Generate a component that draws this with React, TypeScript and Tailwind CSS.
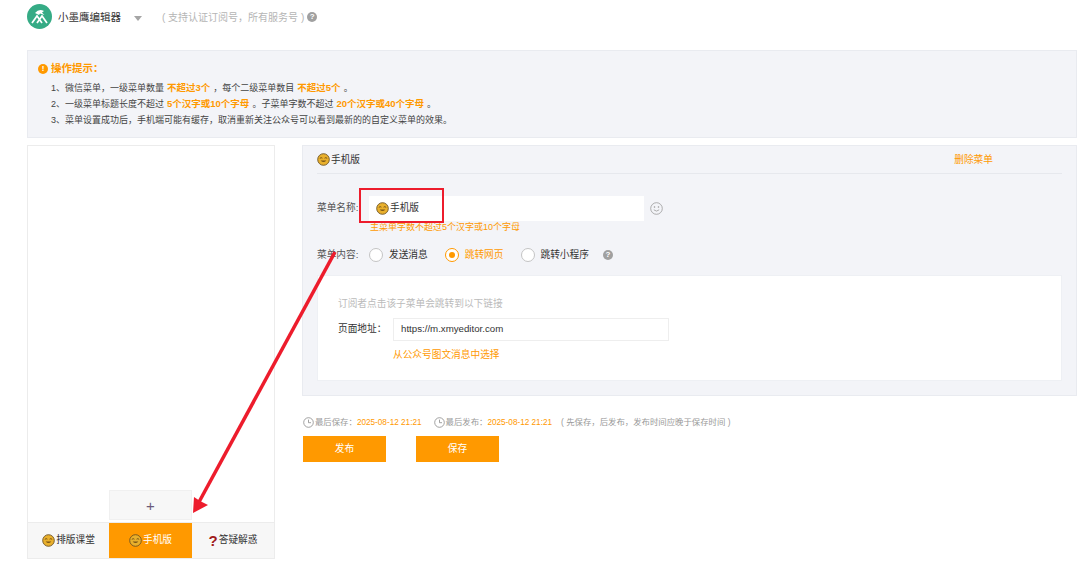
const cjk = "font-['Liberation_Sans','Noto_Sans_CJK_SC',sans-serif]";

function Face({ size = 13 }: { size?: number }) {
  return (
    <svg width={size} height={size} viewBox="0 0 13 13" className="inline-block shrink-0">
      <circle cx="6.5" cy="6.5" r="5.8" fill="#e9b02c" stroke="#6e5220" strokeWidth="0.9" />
      <path d="M2.8 5.4 Q4.2 4 5.4 5.2 M7.6 5.2 Q8.8 4 10.2 5.4" stroke="#6b4a12" strokeWidth="0.9" fill="none" />
      <path d="M3.6 7.4 Q6.5 10.6 9.4 7.4 Z" fill="#7a5514" />
    </svg>
  );
}

function Help({ className = "" }: { className?: string }) {
  return (
    <span className={`flex h-[10px] w-[10px] items-center justify-center rounded-full bg-[#a0a0a0] text-[8px] font-bold leading-none text-white ${className}`}>?</span>
  );
}

function Clock() {
  return (
    <svg width="11" height="11" viewBox="0 0 11 11" fill="none" stroke="#8a8a8a" strokeWidth="0.8" className="shrink-0">
      <circle cx="5.5" cy="5.5" r="4.8" />
      <path d="M5.5 2.6 V5.7 H8" />
    </svg>
  );
}

function Radio({ active, label }: { active?: boolean; label: string }) {
  return (
    <div className="flex items-center gap-[6px]">
      <span className={`flex h-[14px] w-[14px] items-center justify-center rounded-full border bg-white ${active ? "border-[#ff9900]" : "border-[#c4c4c4]"}`}>
        {active && <span className="h-[6px] w-[6px] rounded-full bg-[#ff9900]" />}
      </span>
      <span className={active ? "text-[#ff9900]" : "text-[#333]"}>{label}</span>
    </div>
  );
}

function Hl({ children }: { children: React.ReactNode }) {
  return <b className="mx-[3px] text-[9.5px] font-bold text-[#ff9900]">{children}</b>;
}

export default function App() {
  return (
    <div className={`relative h-[563px] w-[1080px] overflow-hidden bg-white pl-[27px] pr-[3px] text-[9.7px] text-[#333] ${cjk}`}>
      <header className="flex h-[50px] items-start pt-[4px]">
        <svg width="25" height="25" viewBox="0 0 25 25" className="shrink-0">
          <circle cx="12.5" cy="12.5" r="12.5" fill="#35ab85" />
          <path d="M8 9 Q12 4 17 7 L15 8.5 L17.5 11 L13 9.5 L12 11 Z" fill="#fff" />
          <path d="M5 19 L10 12 L15 19 M20 19 L15 12 L10 19" stroke="#fff" strokeWidth="1.7" fill="none" />
        </svg>
        <span className="ml-[6px] mt-[7px] text-[10.5px] leading-[13px]">小墨鹰编辑器</span>
        <span className="ml-[13px] mt-[12px] h-0 w-0 border-x-[4.5px] border-t-[5px] border-x-transparent border-t-[#a5a5a5]" />
        <span className="ml-[20px] mt-[7px] text-[10px] leading-[13px] text-[#b5b5b5]">( 支持认证订阅号，所有服务号 )</span>
        <Help className="ml-[3px] mt-[8px]" />
      </header>

      <section className="h-[88px] border border-[#e9ebf0] bg-[#f3f4f8] pl-[10px] pt-[11px]">
        <div className="flex items-center gap-[3px] font-bold text-[#ff9900]">
          <span className="flex h-[10px] w-[10px] items-center justify-center rounded-full bg-[#ff9900] text-[8px] leading-none text-white">!</span>
          <span className="text-[10.5px] leading-[13px]">操作提示：</span>
        </div>
        <ol className="ml-[13px] mt-[5px] text-[9px] leading-[15.3px] text-[#444]">
          <li>1、微信菜单，一级菜单数量<Hl>不超过3个</Hl>，每个二级菜单数目<Hl>不超过5个</Hl>。</li>
          <li>2、一级菜单标题长度不超过<Hl>5个汉字或10个字母</Hl>。子菜单字数不超过<Hl>20个汉字或40个字母</Hl>。</li>
          <li>3、菜单设置成功后，手机端可能有缓存，取消重新关注公众号可以看到最新的的自定义菜单的效果。</li>
        </ol>
      </section>

      <main className="mt-[7px] flex items-start">
        <aside className="flex h-[414px] w-[248px] flex-col justify-end border border-[#ececec] bg-white">
          <div className="mb-[2px] ml-[81px] flex h-[30px] w-[83px] items-center justify-center border border-[#f0f0f0] bg-[#f7f7f7] text-[15px] font-light leading-none text-[#6b5a7a]">+</div>
          <nav className="grid h-[36px] grid-cols-[81px_83px_1fr] border-t border-[#ececec] bg-[#f7f7f7]">
            <div className="flex items-center justify-center gap-px"><Face />排版课堂</div>
            <div className="flex items-center justify-center gap-px bg-[#ff9900] text-white"><Face />手机版</div>
            <div className="flex items-center justify-center gap-px"><span className="text-[15px] font-bold leading-none text-[#a11b1b]">?</span>答疑解惑</div>
          </nav>
        </aside>

        <div className="ml-[27px] flex-1">
          <section className="h-[251px] border border-[#e9ebf0] bg-[#f3f4f8] px-[14px]">
            <div className="flex h-[28px] items-center justify-between border-b border-[#e6e8ed] pr-[69px] pt-[1px]">
              <span className="flex items-center gap-px"><Face />手机版</span>
              <span className="text-[#ff9900]">删除菜单</span>
            </div>
            <div className="mt-[22px] flex items-center">
              <label className="w-[52px] text-[#555]">菜单名称:</label>
              <div className="flex h-[25px] w-[275px] items-center gap-px bg-white pl-[7px]"><Face />手机版</div>
              <svg width="13" height="13" viewBox="0 0 13 13" fill="none" stroke="#9a9a9a" strokeWidth="0.8" className="ml-[6px]">
                <circle cx="6.5" cy="6.5" r="5.8" />
                <circle cx="4.5" cy="5" r="0.5" />
                <circle cx="8.5" cy="5" r="0.5" />
                <path d="M3.8 7.8 Q6.5 10.4 9.2 7.8" />
              </svg>
            </div>
            <p className="ml-[53px] mt-[1px] text-[9px] leading-[11px] text-[#ff9900]">主菜单字数不超过5个汉字或10个字母</p>
            <div className="mt-[15px] flex items-center">
              <label className="w-[52px] text-[#555]">菜单内容:</label>
              <div className="flex items-center gap-[17px]">
                <Radio label="发送消息" />
                <Radio active label="跳转网页" />
                <Radio label="跳转小程序" />
              </div>
              <Help className="ml-[14px]" />
            </div>
            <div className="mt-[12px] h-[106px] border border-[#eef0f4] bg-white pl-[20px] pt-[21px]">
              <p className="leading-[13px] text-[#bbb]">订阅者点击该子菜单会跳转到以下链接</p>
              <div className="mt-[8px] flex items-center">
                <label className="w-[55px] text-[#333]">页面地址：</label>
                <div className="flex h-[23px] w-[276px] items-center border border-[#eeeeee] pl-[7px] text-[#333]">https://m.xmyeditor.com</div>
              </div>
              <p className="ml-[55px] mt-[7px] leading-[13px] text-[#ff9900]">从公众号图文消息中选择</p>
            </div>
          </section>

          <div className="ml-px mt-[20px] flex items-center text-[8.4px] leading-[13px] text-[#999]">
            <Clock />
            <span className="ml-px">最后保存：</span>
            <span className="text-[8.2px] text-[#ff9900]">2025-08-12 21:21</span>
            <span className="ml-[12px]"><Clock /></span>
            <span className="ml-px">最后发布：</span>
            <span className="text-[8.2px] text-[#ff9900]">2025-08-12 21:21</span>
            <span className="ml-[9px]">( 先保存，后发布，发布时间应晚于保存时间 )</span>
          </div>
          <div className="ml-px mt-[7px] flex gap-[30px]">
            <button className="h-[26px] w-[83px] bg-[#ff9900] text-[9.7px] text-white">发布</button>
            <button className="h-[26px] w-[83px] bg-[#ff9900] text-[9.7px] text-white">保存</button>
          </div>
        </div>
      </main>

      <div className="absolute left-[359px] top-[188px] h-[35px] w-[85px] border-2 border-[#ed1c2c]" />
      <svg width="160" height="270" viewBox="0 0 160 270" className="pointer-events-none absolute left-[190px] top-[245px]" fill="none">
        <path d="M145 7 L9 257" stroke="#ed1c2c" strokeWidth="3.5" />
        <path d="M3 268 L4 252 L10 256 L18 260 Z" fill="#ed1c2c" />
      </svg>
    </div>
  );
}
